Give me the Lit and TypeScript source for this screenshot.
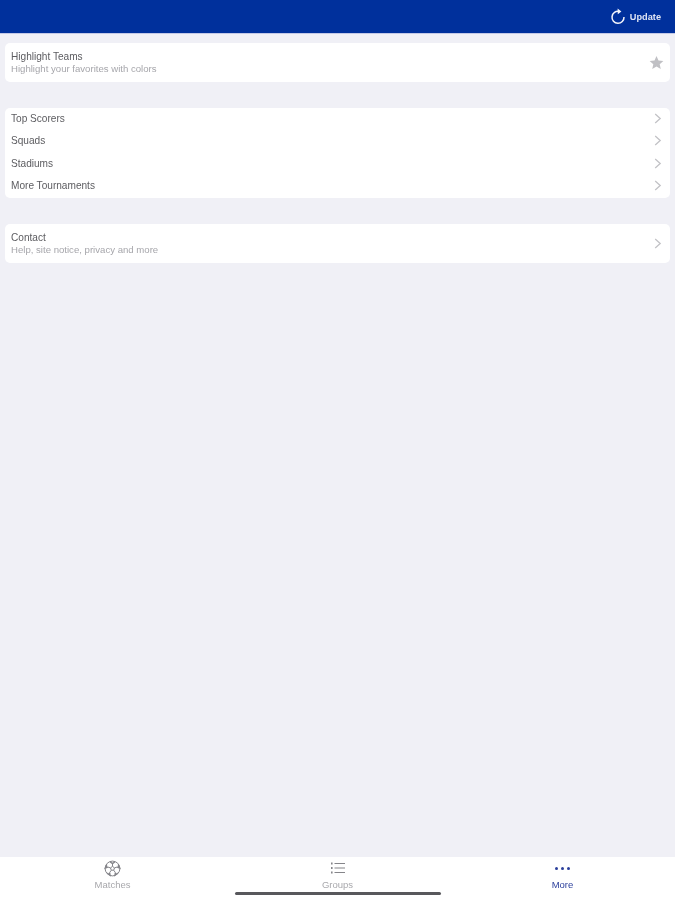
import { LitElement, html, css } from "lit";
import { customElement } from "lit/decorators.js";

const chevron = html`<svg class="chev" width="8" height="11" viewBox="0 0 8 11"><path d="M1.2 1 L6.2 5.5 L1.2 10" fill="none" stroke="#c2c2c6" stroke-width="1.3"/></svg>`;

@customElement("app-root")
export class AppRoot extends LitElement {
  static styles = css`
    :host {
      display: flex;
      flex-direction: column;
      position: relative;
      height: 900px;
      width: 675px;
      overflow: hidden;
      background: #f0f0f6;
      font-family: "Liberation Sans", Arial, sans-serif;
      color: #55555a;
      filter: blur(0.45px);
    }
    .header {
      height: 33px;
      background: #00309c;
      border-bottom: 1px solid #c4c9e6;
      display: flex;
      align-items: center;
      justify-content: flex-end;
      gap: 4px;
      padding-right: 14px;
      color: #dfe5f5;
      font-size: 9.2px;
      font-weight: 700;
      flex: none;
    }
    .header svg { display: block; }
    .main {
      flex: 1;
      padding: 8.5px 5px 0;
      display: flex;
      flex-direction: column;
      gap: 26px;
    }
    .card {
      background: #fff;
      border-radius: 5px;
      display: flex;
      flex-direction: column;
    }
    .row {
      display: flex;
      align-items: center;
      justify-content: space-between;
      padding: 0 8px 1.5px 6px;
      box-sizing: border-box;
      height: 22.4px;
      font-size: 10.1px;
    }
    .row.tall { height: 39.5px; padding-bottom: 0; }
    .lines { display: flex; flex-direction: column; gap: 0.5px; }
    .title { line-height: 11px; color: #5c5c60; }
    .sub { line-height: 11px; font-size: 9.6px; color: #a6a6ab; }
    .star { margin-right: -2px; }
    .tabs {
      flex: none;
      height: 43px;
      background: #fff;
      display: grid;
      grid-template-columns: repeat(3, 1fr);
    }
    .tab {
      display: flex;
      flex-direction: column;
      align-items: center;
      padding-top: 2px;
      font-size: 9.5px;
      color: #a8a8ac;
    }
    .tab.on { color: #2b3f9c; }
    .icon { height: 18px; display: flex; align-items: center; justify-content: center; margin-bottom: 2px; }
    .indicator {
      position: absolute;
      left: 235px;
      bottom: 5px;
      width: 206px;
      height: 3px;
      border-radius: 2px;
      background: #58585c;
    }
  `;

  render() {
    return html`
      <div class="header">
        <svg width="16" height="17" viewBox="0 0 16 17">
          <path d="M9.2 3.4 A6 6 0 1 0 14 9" fill="none" stroke="#f2f4fb" stroke-width="1.5"/>
          <path d="M7.6 0.6 L11.4 3.4 L7.8 6.2 Z" fill="#f2f4fb"/>
        </svg>
        <span>Update</span>
      </div>
      <div class="main">
        <div class="card">
          <div class="row tall">
            <div class="lines">
              <span class="title">Highlight Teams</span>
              <span class="sub">Highlight your favorites with colors</span>
            </div>
            <svg class="star" width="15" height="15" viewBox="0 0 24 24"><path d="M12 1.5 L15.2 8.6 L23 9.4 L17.1 14.6 L18.8 22.3 L12 18.3 L5.2 22.3 L6.9 14.6 L1 9.4 L8.8 8.6 Z" fill="#c0c0c4"/></svg>
          </div>
        </div>
        <div class="card">
          ${["Top Scorers", "Squads", "Stadiums", "More Tournaments"].map(
            (t) => html`<div class="row"><span class="title">${t}</span>${chevron}</div>`
          )}
        </div>
        <div class="card">
          <div class="row tall">
            <div class="lines">
              <span class="title">Contact</span>
              <span class="sub">Help, site notice, privacy and more</span>
            </div>
            ${chevron}
          </div>
        </div>
      </div>
      <div class="tabs">
        <div class="tab">
          <div class="icon">
            <svg width="17" height="17" viewBox="0 0 17 17" fill="none" stroke="#85858a" stroke-width="1">
              <circle cx="8.5" cy="8.5" r="7.4"/>
              <path d="M8.5 6.4 L10.5 7.9 L9.7 10.2 L7.3 10.2 L6.5 7.9 Z"/>
              <path d="M8.5 6.4 V3.6 M10.5 7.9 L13.2 7 M9.7 10.2 L11.4 12.6 M7.3 10.2 L5.6 12.6 M6.5 7.9 L3.8 7"/>
              <path d="M6 1.8 L8.5 3.6 L11 1.8 M13.2 7 L15.6 8 L14.2 4.4 M11.4 12.6 L11 15.2 L13.8 13 M5.6 12.6 L6 15.2 L3.2 13 M3.8 7 L1.4 8 L2.8 4.4" stroke-width="1.4"/>
            </svg>
          </div>
          <span>Matches</span>
        </div>
        <div class="tab">
          <div class="icon">
            <svg width="16" height="14" viewBox="0 0 16 14" fill="none" stroke="#85858a" stroke-width="1.1">
              <path d="M4.5 2.5 H15 M4.5 7 H15 M4.5 11.5 H15"/>
              <path d="M1 2.5 H2.6 M1 7 H2.6 M1 11.5 H2.6" stroke-width="2.2"/>
            </svg>
          </div>
          <span>Groups</span>
        </div>
        <div class="tab on">
          <div class="icon">
            <svg width="17" height="5" viewBox="0 0 17 5" fill="#2b3f9c">
              <circle cx="2.5" cy="2.5" r="1.5"/><circle cx="8.5" cy="2.5" r="1.5"/><circle cx="14.5" cy="2.5" r="1.5"/>
            </svg>
          </div>
          <span>More</span>
        </div>
      </div>
      <div class="indicator"></div>
    `;
  }
}
